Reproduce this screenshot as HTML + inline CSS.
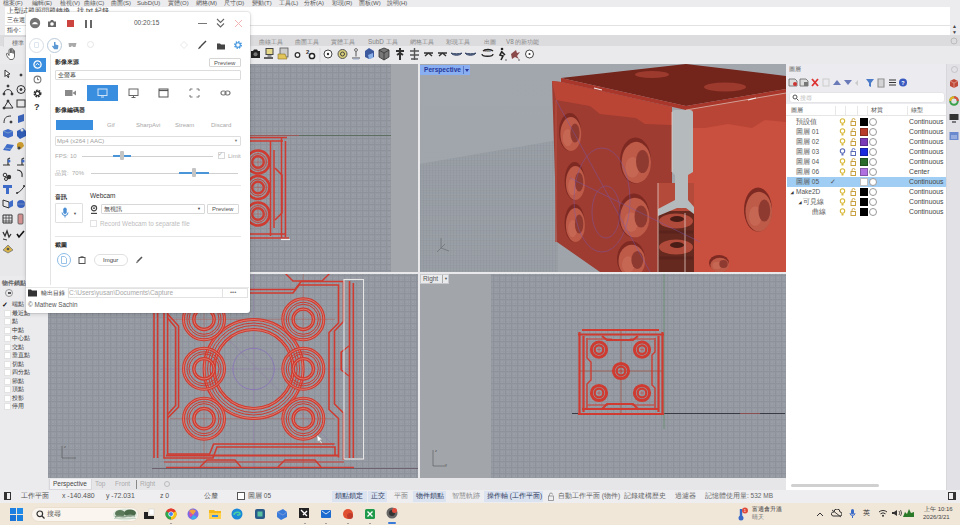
<!DOCTYPE html>
<html lang="zh-Hant"><head><meta charset="utf-8">
<style>
*{margin:0;padding:0;box-sizing:border-box}
html,body{width:960px;height:525px;overflow:hidden}
body{position:relative;font-family:"Liberation Sans",sans-serif;background:#ebebee;color:#333}
.a{position:absolute}
.t{position:absolute;white-space:nowrap;line-height:1}
.grid{background-color:#9a9ea7;background-image:linear-gradient(#8e929b 1px,transparent 1px),linear-gradient(90deg,#8e929b 1px,transparent 1px),linear-gradient(#959aa2 1px,transparent 1px),linear-gradient(90deg,#959aa2 1px,transparent 1px);background-size:6px 6px,6px 6px,3px 3px,3px 3px;background-position:2px 2px,2px 2px,0 0,0 0}
</style></head><body>
<div id="root" style="position:absolute;left:0;top:0;width:960px;height:525px;overflow:hidden">
<!-- menu bar -->
<div class="a" id="menu" style="left:0;top:0;width:960px;height:7px;background:#ececee;font-size:6px;color:#555">
<span class="t" style="left:3px;top:0">檔案(F)</span><span class="t" style="left:32px;top:0">編輯(E)</span><span class="t" style="left:60px;top:0">檢視(V)</span><span class="t" style="left:84px;top:0">曲線(C)</span><span class="t" style="left:111px;top:0">曲面(S)</span><span class="t" style="left:137px;top:0">SubD(U)</span><span class="t" style="left:168px;top:0">實體(O)</span><span class="t" style="left:196px;top:0">網格(M)</span><span class="t" style="left:224px;top:0">尺寸(D)</span><span class="t" style="left:252px;top:0">變動(T)</span><span class="t" style="left:279px;top:0">工具(L)</span><span class="t" style="left:304px;top:0">分析(A)</span><span class="t" style="left:332px;top:0">彩現(R)</span><span class="t" style="left:359px;top:0">面板(W)</span><span class="t" style="left:387px;top:0">說明(H)</span>
</div>
<!-- command area -->
<div class="a" style="left:5px;top:7px;width:945px;height:28px;background:#fff"></div>
<div class="a" style="left:5px;top:25px;width:945px;height:1px;background:#e2e2e4"></div>
<div class="a" style="left:950px;top:7px;width:10px;height:28px;background:#ececee"></div>
<div class="t" style="left:7px;top:7.5px;font-size:6.5px;color:#3a3a3a">上型試題照問題轉換... 找 txt 紀錄</div>
<div class="t" style="left:7px;top:17px;font-size:6.4px;color:#3a3a3a">三在選</div>
<div class="t" style="left:7px;top:26.5px;font-size:6.4px;color:#3a3a3a">指令:</div>
<div class="t" style="left:952px;top:24px;font-size:5px;color:#444">▲</div><div class="t" style="left:952px;top:30px;font-size:5px;color:#444">▼</div>
<!-- tab bar -->
<div class="a" style="left:0;top:35px;width:960px;height:12px;background:#dcdcdf"></div>
<!-- toolbar -->
<div class="a" style="left:0;top:46px;width:960px;height:18px;background:#eaeaed"></div>
<div id="tabs" style="position:absolute;left:0;top:0;font-size:6.3px;color:#858585">
<div class="a" style="left:3px;top:36px;width:24px;height:11px;background:#ebebee;border:1px solid #d8d8dc;border-bottom:none"></div><span class="t" style="left:12px;top:39.5px;color:#666">標準</span>
<span class="t" style="left:259px;top:39px">曲線工具</span><span class="t" style="left:295px;top:39px">曲面工具</span><span class="t" style="left:331px;top:39px">實體工具</span><span class="t" style="left:368px;top:39px">SubD 工具</span><span class="t" style="left:410px;top:39px">網格工具</span><span class="t" style="left:446px;top:39px">彩現工具</span><span class="t" style="left:484px;top:39px">出圖</span><span class="t" style="left:506px;top:39px">V8 的新功能</span>
</div>
<svg class="a" style="left:950px;top:37px" width="8" height="8" viewBox="0 0 8 8"><circle cx="4" cy="4" r="3" fill="none" stroke="#bbb" stroke-width="1"/></svg>
<svg class="a" style="left:0;top:46px" width="560" height="18" viewBox="0 0 560 18">
<!-- hand -->
<path d="M10 13.5c-2-1.5-3.5-3.5-3.5-5.5 0-1 1.2-1 1.7 0l.8 1.5V4c0-1 1.4-1 1.4 0V7V3c0-1 1.4-1 1.4 0V7V3.5c0-1 1.4-1 1.4 0v4V5c0-1 1.3-1 1.3 0V10c0 2-1 3.5-2.5 3.5z" fill="#fff" stroke="#666" stroke-width="1"/>
<!-- camera -->
<path d="M251 5h2l1-1.5h3l1 1.5h2v7h-9z" fill="#222"/><circle cx="255.5" cy="8.3" r="2" fill="#777"/>
<!-- computer -->
<rect x="266" y="2.5" width="7" height="6" fill="#e7d98a" stroke="#444" stroke-width="1"/><path d="M264 12h9" stroke="#333" stroke-width="1.5"/><rect x="267.5" y="9" width="4" height="2" fill="#999"/>
<!-- folder grid -->
<rect x="280" y="2" width="8" height="9" fill="#ccc" stroke="#555" stroke-width=".8"/><path d="M278 8h7l2 5h-9z" fill="#e2c55a" stroke="#8a7020" stroke-width=".6"/>
<!-- small circle -->
<circle cx="297.5" cy="9" r="2.3" fill="#fff" stroke="#333" stroke-width="1.3"/>
<!-- 2o -->
<text x="306" y="8" font-size="6" font-family="Liberation Sans" fill="#333" font-weight="bold">2</text><circle cx="312" cy="10" r="2.6" fill="#fff" stroke="#222" stroke-width="1.5"/>
<path d="M320 2v14" stroke="#d7d7da"/>
<circle cx="328" cy="8" r="4" fill="#fff" stroke="#444" stroke-width="1"/><circle cx="328" cy="8" r="1.2" fill="#333"/>
<circle cx="342.5" cy="8" r="4.5" fill="#d9cf7a" stroke="#555" stroke-width="1"/><circle cx="342.5" cy="8" r="2" fill="none" stroke="#444" stroke-width="1"/>
<circle cx="356" cy="4" r="1.4" fill="#fff" stroke="#444" stroke-width=".8"/><path d="M356 5.5v5M352 12h8" stroke="#555" stroke-width="1"/><path d="M353 13h6" stroke="#9ac" stroke-width="1"/>
<path d="M365 5l4-3 5 3v6l-5 2-4-2z" fill="#3e5a9e"/><path d="M368 9l5-2v5l-4 1z" fill="#8ab0e8"/>
<path d="M379 4l5-2 5 2v7l-5 3-5-3z" fill="#777" stroke="#333" stroke-width=".8"/><path d="M379 4l5 3 5-3M384 7v7" stroke="#333" stroke-width=".8" fill="none"/>
<path d="M396 5h8M400 2v12M397 9l3-2 3 2" stroke="#333" stroke-width="2" fill="none"/>
<path d="M410 5h9M410 9h9M411 13h7M414.5 2v12" stroke="#555" stroke-width="1.4" fill="none"/>
<path d="M424 7h9M425 10l3.5-3 3.5 3" stroke="#333" stroke-width="1.4" fill="none"/>
<path d="M438 7h9M439 10l3.5-3 3.5 3" stroke="#333" stroke-width="1.4" fill="none"/>
<path d="M451 7c2 3 9 3 11 0-2 1-9 1-11 0z" fill="#5a6a8a" stroke="#3a4a6a" stroke-width="1"/>
<path d="M465 7c2 3 9 3 11 0-2 1-9 1-11 0z" fill="#5a6a8a" stroke="#3a4a6a" stroke-width="1"/>
<path d="M482 8c0 3 11 3 11 0M483 5c2-2 8-2 10 0" stroke="#222" stroke-width="1.3" fill="none"/><text x="484" y="6" font-size="4" font-family="Liberation Sans" fill="#222">360</text>
<circle cx="502" cy="3" r="1.3" fill="#222"/><path d="M502 5l-2 4 3 1-2 4M502 6l3 3" stroke="#222" stroke-width="1.6" fill="none"/><circle cx="506" cy="14" r=".8" fill="#555"/>
<path d="M511 8l5-4 1 3 3-1-3 4 2 3-4-2-3 2z" fill="#8a4a4a"/><circle cx="519" cy="14" r=".8" fill="#555"/>
<circle cx="529.5" cy="8" r="4" fill="#fff" stroke="#444" stroke-width="1"/><circle cx="529.5" cy="8" r="1" fill="#333"/>
</svg>
<!-- left toolbar -->
<div class="a" style="left:0;top:64px;width:48px;height:212px;background:#e8e8eb"></div>
<svg class="a" style="left:0;top:64px" width="28" height="212" viewBox="0 0 28 212">
<g stroke="#333" stroke-width="1" fill="none">
<path d="M5 6l5 4-2.5.5L9 13 8 13.5 6.5 11 5 12.5z" fill="#fff"/>
<circle cx="21" cy="11" r="1" fill="#333"/>
<path d="M4 30c0-6 8-6 8 0" /><circle cx="4" cy="30" r="1" fill="#333"/><circle cx="12" cy="30" r="1" fill="#333"/><circle cx="8" cy="22" r="1" fill="#333"/>
<circle cx="21" cy="25.5" r="4"/><circle cx="21" cy="25.5" r="1" fill="#333"/>
<path d="M4 44l4-7 5 7z"/><circle cx="4" cy="44" r="1" fill="#333"/><circle cx="8" cy="37" r="1" fill="#333"/>
<rect x="17" y="36" width="8" height="7"/>
<path d="M4 59c0-5 2-7 7-7"/><circle cx="11" cy="58" r="1" fill="#333"/>
</g>
<path d="M18 52l6-2v7l-6 2z" fill="#3a63b8"/>
<path d="M3 67l5-2 5 2v5l-5 2-5-2z" fill="#3f6cc8"/><path d="M3 67l5 2 5-2" stroke="#9bc" fill="none" stroke-width=".6"/>
<path d="M17 67l6-3 3 3v5l-6 3-3-3z" fill="#2f5cb5"/><circle cx="22" cy="66" r="1.5" fill="#ddd"/>
<path d="M3 86l4-6 7 1-4 6z" fill="#3f6cc8"/><path d="M5 84l6 1" stroke="#bcd" stroke-width=".5"/>
<path d="M17 80c1-2 4-3 6-1l1 3-3 3-4-2z" fill="#c89a30"/><circle cx="19" cy="84" r="1.6" fill="#444"/>
<path d="M4 101h4v-6l2-1M3 101h7" stroke="#333" stroke-width="1.2" fill="none"/><circle cx="9" cy="97" r="1.5" fill="#3f6cc8"/>
<path d="M18 101h4v-6l2-1M17 101h7" stroke="#333" stroke-width="1.2" fill="none"/><circle cx="23" cy="97" r="1.5" fill="#3f6cc8"/>
<circle cx="5" cy="111" r="1.8" fill="none" stroke="#333"/><circle cx="9" cy="113" r="2.2" fill="#333"/><circle cx="6" cy="115" r="1.5" fill="none" stroke="#333"/>
<path d="M17 106c4 0 6 3 5 7" stroke="#333" stroke-width="1.2" fill="none"/>
<path d="M3 121h9v3H9v6H6v-6H3z" fill="#3f6cc8"/>
<path d="M17 129c4-1 5-5 8-7" stroke="#333" stroke-width="1" fill="none"/><circle cx="17" cy="129" r="1" fill="#333"/><circle cx="24" cy="122" r="1" fill="#333"/>
<path d="M3 136l6 2v6l-6-2z" fill="none" stroke="#333"/><path d="M9 138l4-2v6l-4 2z" fill="#3f6cc8"/>
<circle cx="21" cy="140" r="4" fill="#3a63c0"/><path d="M17 140h8" stroke="#9ab" stroke-width=".6"/>
<path d="M3 151h9v8H3z" fill="none" stroke="#333"/><path d="M3 154h9M3 157h9M6 151v8M9 151v8" stroke="#333" stroke-width=".7"/>
<rect x="18" y="150" width="5" height="10" rx="1" fill="#d29090" stroke="#555" stroke-width=".8"/>
<path d="M3 168l2 4 2-5 2 6 2-3" stroke="#333" stroke-width="1.3" fill="none"/><path d="M3 175l4 1" stroke="#333"/>
<path d="M17 170l2 3 5-6" stroke="#111" stroke-width="1.6" fill="none"/>
<path d="M3 186l5-5 5 5-5 3z" fill="#d8b54a" stroke="#777" stroke-width=".8"/><circle cx="8" cy="185" r="1.3" fill="#555"/>
</svg>
<!-- osnap panel -->
<div class="a" style="left:0;top:276px;width:48px;height:214px;background:#ebebee"></div>
<div class="t" style="left:2px;top:280px;font-size:6px;color:#666;font-weight:bold">物件鎖點</div>
<div class="a" style="left:5px;top:289px;width:8px;height:8px;border:1px solid #999;border-radius:50%"></div><div class="a" style="left:7.5px;top:292px;width:3px;height:2px;background:#555"></div>
<div class="t" style="left:2px;top:300.5px;font-size:7px;color:#111;font-weight:bold">✓</div>
<div class="t" style="left:12px;top:301.0px;font-size:6px;color:#333">端點</div>
<div class="a" style="left:4px;top:309.5px;width:7px;height:7px;background:#fff;border:1px solid #e2e2e2"></div>
<div class="t" style="left:12px;top:309.5px;font-size:6px;color:#333">最近點</div>
<div class="a" style="left:4px;top:318.0px;width:7px;height:7px;background:#fff;border:1px solid #e2e2e2"></div>
<div class="t" style="left:12px;top:318.0px;font-size:6px;color:#333">點</div>
<div class="a" style="left:4px;top:326.5px;width:7px;height:7px;background:#fff;border:1px solid #e2e2e2"></div>
<div class="t" style="left:12px;top:326.5px;font-size:6px;color:#333">中點</div>
<div class="a" style="left:4px;top:335.0px;width:7px;height:7px;background:#fff;border:1px solid #e2e2e2"></div>
<div class="t" style="left:12px;top:335.0px;font-size:6px;color:#333">中心點</div>
<div class="a" style="left:4px;top:343.5px;width:7px;height:7px;background:#fff;border:1px solid #e2e2e2"></div>
<div class="t" style="left:12px;top:343.5px;font-size:6px;color:#333">交點</div>
<div class="a" style="left:4px;top:352.0px;width:7px;height:7px;background:#fff;border:1px solid #e2e2e2"></div>
<div class="t" style="left:12px;top:352.0px;font-size:6px;color:#333">垂直點</div>
<div class="a" style="left:4px;top:360.5px;width:7px;height:7px;background:#fff;border:1px solid #e2e2e2"></div>
<div class="t" style="left:12px;top:360.5px;font-size:6px;color:#333">切點</div>
<div class="a" style="left:4px;top:369.0px;width:7px;height:7px;background:#fff;border:1px solid #e2e2e2"></div>
<div class="t" style="left:12px;top:369.0px;font-size:6px;color:#333">四分點</div>
<div class="a" style="left:4px;top:377.5px;width:7px;height:7px;background:#fff;border:1px solid #e2e2e2"></div>
<div class="t" style="left:12px;top:377.5px;font-size:6px;color:#333">節點</div>
<div class="a" style="left:4px;top:386.0px;width:7px;height:7px;background:#fff;border:1px solid #e2e2e2"></div>
<div class="t" style="left:12px;top:386.0px;font-size:6px;color:#333">頂點</div>
<div class="a" style="left:4px;top:394.5px;width:7px;height:7px;background:#fff;border:1px solid #e2e2e2"></div>
<div class="t" style="left:12px;top:394.5px;font-size:6px;color:#333">投影</div>
<div class="a" style="left:4px;top:403.0px;width:7px;height:7px;background:#fff;border:1px solid #e2e2e2"></div>
<div class="t" style="left:12px;top:403.0px;font-size:6px;color:#333">停用</div>

<!-- viewports -->
<div class="a grid" id="vpTop" style="left:48px;top:64px;width:343px;height:208px;overflow:hidden"><svg width="343" height="208" viewBox="48 64 343 208" style="position:absolute;left:0;top:0"><path d="M249 135.5h50" stroke="#9a5a58" stroke-width="1.2"/><path d="M299 135.5h92" stroke="#5e6e60" stroke-width="1.2"/><circle cx="258" cy="162" r="11.5" fill="none" stroke="#cf3b30" stroke-width="2.6"/><circle cx="258" cy="162" r="8.4" fill="none" stroke="#cf3b30" stroke-width=".9"/><circle cx="258" cy="162" r="5.8" fill="none" stroke="#cf3b30" stroke-width="2.4"/><path d="M248 162h20M258 152v20" stroke="#b05a50" stroke-width=".5"/><circle cx="258" cy="187.5" r="11.5" fill="none" stroke="#cf3b30" stroke-width="2.6"/><circle cx="258" cy="187.5" r="8.4" fill="none" stroke="#cf3b30" stroke-width=".9"/><circle cx="258" cy="187.5" r="5.8" fill="none" stroke="#cf3b30" stroke-width="2.4"/><path d="M248 187.5h20M258 177.5v20" stroke="#b05a50" stroke-width=".5"/><circle cx="258" cy="214" r="11.5" fill="none" stroke="#cf3b30" stroke-width="2.6"/><circle cx="258" cy="214" r="8.4" fill="none" stroke="#cf3b30" stroke-width=".9"/><circle cx="258" cy="214" r="5.8" fill="none" stroke="#cf3b30" stroke-width="2.4"/><path d="M248 214h20M258 204v20" stroke="#b05a50" stroke-width=".5"/><g fill="none" stroke="#cf3b30" stroke-width="1.5">
<path d="M249 137.5h38M249 141h34M249 234h36M249 238h40"/>
<path d="M281.5 137v101M285.5 141v96"/>
<path d="M270.5 141v95M274 150v78"/>
<path d="M275 168l7 7v38l-7 7"/>
</g>
<path d="M281 239.5h9" stroke="#eee" stroke-width="1.2"/></svg></div>
<div class="a" style="left:391px;top:64px;width:27px;height:208px;background:#a4a8ad"></div>
<div class="a" id="vpPersp" style="left:419px;top:64px;width:367px;height:208px;overflow:hidden"><svg width="367" height="208" viewBox="419 64 367 208" style="position:absolute;left:0;top:0">
<defs><linearGradient id="pbg" x1="0" y1="0" x2="0" y2="1"><stop offset="0" stop-color="#a2a7ae"/><stop offset="1" stop-color="#9fa4ab"/></linearGradient>
<pattern id="fgrid" width="3" height="2.5" patternUnits="userSpaceOnUse"><rect width="3" height="2.5" fill="#9aa0a7"/><path d="M0 .5h3M.5 0v2.5" stroke="#90959c" stroke-width=".5"/></pattern></defs>
<rect x="419" y="64" width="367" height="208" fill="url(#pbg)"/>
<path d="M419 164 558 140V272H419z" fill="url(#fgrid)"/>
<g stroke="#6a6e74" stroke-width=".7" fill="none"><path d="M441 238v10l-4 4M441 248l8 3M441 248l4-4"/></g>
<!-- right face -->
<path d="M686 108 786 90V272H686z" fill="#c94f3e"/>
<path d="M686 110 786 92V122L765 120 752 128 728 124 705 128 693 128z" fill="#b94536"/>
<!-- left face -->
<path d="M552 81 561 82 672 107V183H658V272H600L557 242z" fill="#9e3c32"/>
<path d="M552 81 561 82 672 107 672 125 645 124 636 118 600 114 590 106 556 100z" fill="#bb4535"/>
<path d="M556 100v142" stroke="#b04a3e" stroke-width="1.5"/>
<!-- slot -->
<path d="M658 183h36v30h-36z" fill="#b44a3a"/>
<path d="M658 211h36v61h-36z" fill="#66291f"/>
<ellipse cx="676" cy="221" rx="17" ry="7.5" fill="#b04a3a"/><ellipse cx="677" cy="219" rx="7" ry="3" fill="#4a1c16"/>
<ellipse cx="676" cy="247" rx="17" ry="7.5" fill="#b04a3a"/><ellipse cx="677" cy="245" rx="7" ry="3" fill="#4a1c16"/>
<path d="M659 232h34M659 258h34" stroke="#5a241c" stroke-width="3"/>
<path d="M672 113Q672 110 675 110H690Q693 110 693 113V172L688 175V200L694 207V214L686 208H677L658 216V209L675 200V175L672 172Z" fill="#b5babd"/>
<path d="M658 183v89M685 213v59M672 112v60" stroke="#e8d4cc" stroke-width=".9" opacity=".85"/>
<!-- lid -->
<path d="M561 78 686 64 786 76V89L686 106z" fill="#73241b"/>
<path d="M561 78 686 106 786 89V93L686 110 561 82z" fill="#a8362a"/><path d="M686 110 786 93" stroke="#e0c8c0" stroke-width=".7"/>
<ellipse cx="652" cy="74.5" rx="17" ry="3.5" fill="#9c3a2e"/>
<ellipse cx="725" cy="87" rx="21" ry="4.5" fill="#9c3a2e"/>
<path d="M594 88l8 2M748 100l8-2" stroke="#efe6e4" stroke-width="1.2"/>
<ellipse cx="570" cy="132" rx="11" ry="19" fill="#7e2a22"/><ellipse cx="570.8" cy="134" rx="10.4" ry="17.1" fill="#bd5a48"/><ellipse cx="567.8" cy="137.7" rx="5.0" ry="8.6" fill="#c86a58" opacity=".8"/><ellipse cx="575.0" cy="133" rx="4.6" ry="9.5" fill="#8f3a30"/><ellipse cx="574.6" cy="181" rx="10" ry="19" fill="#7e2a22"/><ellipse cx="575.4" cy="183" rx="9.5" ry="17.1" fill="#bd5a48"/><ellipse cx="572.6" cy="186.7" rx="4.5" ry="8.6" fill="#c86a58" opacity=".8"/><ellipse cx="579.1" cy="182" rx="4.2" ry="9.5" fill="#8f3a30"/><ellipse cx="574.6" cy="223" rx="10" ry="19" fill="#7e2a22"/><ellipse cx="575.4" cy="225" rx="9.5" ry="17.1" fill="#bd5a48"/><ellipse cx="572.6" cy="228.7" rx="4.5" ry="8.6" fill="#c86a58" opacity=".8"/><ellipse cx="579.1" cy="224" rx="4.2" ry="9.5" fill="#8f3a30"/><ellipse cx="635.5" cy="160.5" rx="15.5" ry="23" fill="#7e2a22"/><ellipse cx="636.3" cy="162.5" rx="14.7" ry="20.7" fill="#bd5a48"/><ellipse cx="632.4" cy="167.4" rx="7.0" ry="10.3" fill="#c86a58" opacity=".8"/><ellipse cx="642.5" cy="161.5" rx="6.5" ry="11.5" fill="#8f3a30"/><ellipse cx="634" cy="215.6" rx="15.5" ry="22" fill="#7e2a22"/><ellipse cx="634.8" cy="217.6" rx="14.7" ry="19.8" fill="#bd5a48"/><ellipse cx="630.9" cy="222.2" rx="7.0" ry="9.9" fill="#c86a58" opacity=".8"/><ellipse cx="641.0" cy="216.6" rx="6.5" ry="11.0" fill="#8f3a30"/><ellipse cx="631" cy="259" rx="14" ry="18" fill="#7e2a22"/><ellipse cx="631.8" cy="261" rx="13.3" ry="16.2" fill="#bd5a48"/><ellipse cx="628.2" cy="264.4" rx="6.3" ry="8.1" fill="#c86a58" opacity=".8"/><ellipse cx="637.3" cy="260" rx="5.9" ry="9.0" fill="#8f3a30"/><ellipse cx="758" cy="209.6" rx="14" ry="22" fill="#7e2a22"/><ellipse cx="758.8" cy="211.6" rx="13.3" ry="19.8" fill="#bd5a48"/><ellipse cx="755.2" cy="216.2" rx="6.3" ry="9.9" fill="#c86a58" opacity=".8"/><ellipse cx="764.3" cy="210.6" rx="5.9" ry="11.0" fill="#8f3a30"/><ellipse cx="719" cy="263" rx="10" ry="8" fill="#7e2a22"/><ellipse cx="719.8" cy="265" rx="9.5" ry="7.2" fill="#bd5a48"/><ellipse cx="717.0" cy="265.4" rx="4.5" ry="3.6" fill="#c86a58" opacity=".8"/><ellipse cx="723.5" cy="264" rx="4.2" ry="4.0" fill="#8f3a30"/><g fill="none" stroke="#7a5ab8" stroke-width=".7" opacity=".6">
<ellipse cx="602" cy="200" rx="28" ry="52"/><ellipse cx="606" cy="212" rx="14" ry="26"/>
<path d="M556 100 650 272M570 178 700 242"/></g>
</svg>
<div class="a" style="left:1px;top:1px;width:50px;height:10px;background:#8aaff0"></div><div class="t" style="left:5px;top:2.5px;font-size:6.6px;font-weight:bold;color:#26399a">Perspective</div><div class="a" style="left:44px;top:2px;width:1px;height:8px;background:#5a7ac8"></div><svg class="a" style="left:46px;top:5px" width="4" height="3" viewBox="0 0 4 3"><path d="M0 0h4L2 3z" fill="#26399a"/></svg></div>
<div class="a grid" id="vpFront" style="left:48px;top:273px;width:370px;height:205px;overflow:hidden"><svg width="370" height="205" viewBox="48 273 370 205" style="position:absolute;left:0;top:0"><g stroke="#b0584e" stroke-width=".6" fill="none" opacity=".75"><path d="M170 319.3h165M170 418.7h165M204 273v195M303.3 273v195"/></g><g stroke="#8c6ab0" stroke-width=".6" fill="none" opacity=".55"><path d="M160 369h190M253.6 273v195"/><path d="M212 323 335 447"/></g><circle cx="253.6" cy="369" r="49.5" fill="none" stroke="#cf3b30" stroke-width="3"/><circle cx="253.6" cy="369" r="49.5" fill="none" stroke="#de8a7e" stroke-width=".8"/><circle cx="253.6" cy="369" r="46" fill="none" stroke="#cf3b30" stroke-width="1"/><circle cx="253.6" cy="369" r="43.5" fill="none" stroke="#cf3b30" stroke-width="1"/><circle cx="253.6" cy="369" r="39.5" fill="none" stroke="#cf3b30" stroke-width="3.2"/><circle cx="253.6" cy="369" r="39.5" fill="none" stroke="#de8a7e" stroke-width=".8"/><circle cx="253.6" cy="369" r="20.7" fill="none" stroke="#8466c0" stroke-width=".8" opacity=".8"/><circle cx="204" cy="319.3" r="20.5" fill="none" stroke="#cf3b30" stroke-width="3"/><circle cx="204" cy="319.3" r="20.5" fill="none" stroke="#de8a7e" stroke-width=".8"/><circle cx="204" cy="319.3" r="17" fill="none" stroke="#cf3b30" stroke-width="1"/><circle cx="204" cy="319.3" r="15" fill="none" stroke="#cf3b30" stroke-width="1"/><circle cx="204" cy="319.3" r="10.2" fill="none" stroke="#cf3b30" stroke-width="3.4"/><circle cx="204" cy="319.3" r="10.2" fill="none" stroke="#de8a7e" stroke-width=".8"/><circle cx="204" cy="368.8" r="20.5" fill="none" stroke="#cf3b30" stroke-width="3"/><circle cx="204" cy="368.8" r="20.5" fill="none" stroke="#de8a7e" stroke-width=".8"/><circle cx="204" cy="368.8" r="17" fill="none" stroke="#cf3b30" stroke-width="1"/><circle cx="204" cy="368.8" r="15" fill="none" stroke="#cf3b30" stroke-width="1"/><circle cx="204" cy="368.8" r="10.2" fill="none" stroke="#cf3b30" stroke-width="3.4"/><circle cx="204" cy="368.8" r="10.2" fill="none" stroke="#de8a7e" stroke-width=".8"/><circle cx="204" cy="418.7" r="20.5" fill="none" stroke="#cf3b30" stroke-width="3"/><circle cx="204" cy="418.7" r="20.5" fill="none" stroke="#de8a7e" stroke-width=".8"/><circle cx="204" cy="418.7" r="17" fill="none" stroke="#cf3b30" stroke-width="1"/><circle cx="204" cy="418.7" r="15" fill="none" stroke="#cf3b30" stroke-width="1"/><circle cx="204" cy="418.7" r="10.2" fill="none" stroke="#cf3b30" stroke-width="3.4"/><circle cx="204" cy="418.7" r="10.2" fill="none" stroke="#de8a7e" stroke-width=".8"/><circle cx="303.3" cy="319.3" r="20.5" fill="none" stroke="#cf3b30" stroke-width="3"/><circle cx="303.3" cy="319.3" r="20.5" fill="none" stroke="#de8a7e" stroke-width=".8"/><circle cx="303.3" cy="319.3" r="17" fill="none" stroke="#cf3b30" stroke-width="1"/><circle cx="303.3" cy="319.3" r="15" fill="none" stroke="#cf3b30" stroke-width="1"/><circle cx="303.3" cy="319.3" r="10.2" fill="none" stroke="#cf3b30" stroke-width="3.4"/><circle cx="303.3" cy="319.3" r="10.2" fill="none" stroke="#de8a7e" stroke-width=".8"/><circle cx="303.3" cy="368.8" r="20.5" fill="none" stroke="#cf3b30" stroke-width="3"/><circle cx="303.3" cy="368.8" r="20.5" fill="none" stroke="#de8a7e" stroke-width=".8"/><circle cx="303.3" cy="368.8" r="17" fill="none" stroke="#cf3b30" stroke-width="1"/><circle cx="303.3" cy="368.8" r="15" fill="none" stroke="#cf3b30" stroke-width="1"/><circle cx="303.3" cy="368.8" r="10.2" fill="none" stroke="#cf3b30" stroke-width="3.4"/><circle cx="303.3" cy="368.8" r="10.2" fill="none" stroke="#de8a7e" stroke-width=".8"/><circle cx="303.3" cy="418.7" r="20.5" fill="none" stroke="#cf3b30" stroke-width="3"/><circle cx="303.3" cy="418.7" r="20.5" fill="none" stroke="#de8a7e" stroke-width=".8"/><circle cx="303.3" cy="418.7" r="17" fill="none" stroke="#cf3b30" stroke-width="1"/><circle cx="303.3" cy="418.7" r="15" fill="none" stroke="#cf3b30" stroke-width="1"/><circle cx="303.3" cy="418.7" r="10.2" fill="none" stroke="#cf3b30" stroke-width="3.4"/><circle cx="303.3" cy="418.7" r="10.2" fill="none" stroke="#de8a7e" stroke-width=".8"/><g fill="none" stroke="#cf3b30" stroke-width="1.6">
<path d="M154 273v185M157.6 273v185"/>
<path d="M164 273v185h49l4-11h118v9"/>
<path d="M167.6 273v181h42l4-10h121"/>
<path d="M167.6 318l8 9.5v78l-8 9M167.6 314l11 12v81l-11 11"/>
<path d="M249 289.5h46l6-8h42.5v40l-9 9.5v73l9 9v47"/>
<path d="M249 293h44l6-8h39.5v38l-9.5 9.5v77l9.5 9v39"/>
<path d="M349 346l-8 6v18l8 6M345.5 349l-4 3v18l4 3" stroke-width="1.2"/>
<path d="M349.5 281v177M353.3 283v175"/>
<path d="M166 455.5h172M166 467.6h188" stroke-width="1.8"/>
<path d="M200 467l7-7h28l6 7M278 467l7-7h30l6 7" stroke-width="1.4"/>
<path d="M164 462h180" stroke-width="1"/>
<path d="M285 273l8 8h29l8-8" stroke-width="1.4"/>
</g>
<path d="M152 468.5h266" stroke="#6a5a6a" stroke-width=".9"/>
<rect x="344" y="279.5" width="19.5" height="179.5" fill="none" stroke="#e6e6e6" stroke-width="1.1"/>
<g stroke="#555" stroke-width=".6" fill="none"><path d="M62 446v12h12"/></g>
<text x="64" y="448" font-size="4" fill="#555" font-family="Liberation Sans">z</text><text x="74" y="459" font-size="4" fill="#555" font-family="Liberation Sans">x</text>
<path d="M317 435l.5 7 1.6-1.6 2 3 1-.6-2-3h2.4z" fill="#fff" stroke="#777" stroke-width=".4"/>
</svg></div>
<div class="a" id="vpRight" style="left:419px;top:273px;width:367px;height:205px;background:#a2a6ab;overflow:hidden"><div class="a grid" style="left:72px;top:0;width:295px;height:205px"></div><svg width="367" height="205" viewBox="419 273 367 205" style="position:absolute;left:0;top:0">
<path d="M572 413.5h6M664 413.5h121" stroke="#3a3a44" stroke-width="1"/><path d="M740 413.5h20" stroke="#8a5050" stroke-width="1"/>
<path d="M664 273v156" stroke="#5f8a6a" stroke-width=".8"/>
<path d="M580 371h82M621 330v84" stroke="#a04a3a" stroke-width=".7"/>
<g fill="none" stroke="#cf3b30">
<path d="M582 330h77M578 334.5h86" stroke-width="2"/>
<path d="M579.5 332v82M583.5 336v76" stroke-width="2.2"/>
<path d="M587 338v20l4 4v18l-4 4v24" stroke-width="1.4"/>
<path d="M662.5 332v82M658.5 336v76" stroke-width="2.2"/>
<path d="M655 338v14l-3 3v30l3 3v22" stroke-width="1.4"/>
<path d="M582 409h77M578 414h86" stroke-width="2.2"/>
<path d="M602 336l5 4h26l5-4M602 409l5-5h26l5 5" stroke-width="2"/>
<path d="M588 339h24M630 339h24M588 405h20M632 405h22" stroke-width="1"/>
</g>
<circle cx="599" cy="349.6" r="7.6" fill="none" stroke="#cf3b30" stroke-width="3"/><circle cx="599" cy="349.6" r="4.3" fill="none" stroke="#cf3b30" stroke-width="2.2"/><path d="M597 349.6h4M599 347.6v4" stroke="#cf3b30" stroke-width=".5"/><circle cx="642" cy="349.6" r="7.6" fill="none" stroke="#cf3b30" stroke-width="3"/><circle cx="642" cy="349.6" r="4.3" fill="none" stroke="#cf3b30" stroke-width="2.2"/><path d="M640 349.6h4M642 347.6v4" stroke="#cf3b30" stroke-width=".5"/><circle cx="621" cy="371" r="7.6" fill="none" stroke="#cf3b30" stroke-width="3"/><circle cx="621" cy="371" r="4.3" fill="none" stroke="#cf3b30" stroke-width="2.2"/><path d="M619 371h4M621 369v4" stroke="#cf3b30" stroke-width=".5"/><circle cx="599" cy="393" r="7.6" fill="none" stroke="#cf3b30" stroke-width="3"/><circle cx="599" cy="393" r="4.3" fill="none" stroke="#cf3b30" stroke-width="2.2"/><path d="M597 393h4M599 391v4" stroke="#cf3b30" stroke-width=".5"/><circle cx="642" cy="393" r="7.6" fill="none" stroke="#cf3b30" stroke-width="3"/><circle cx="642" cy="393" r="4.3" fill="none" stroke="#cf3b30" stroke-width="2.2"/><path d="M640 393h4M642 391v4" stroke="#cf3b30" stroke-width=".5"/><g stroke="#555" stroke-width=".6" fill="none"><path d="M433 450v16h12"/></g><text x="435" y="452" font-size="4" fill="#555" font-family="Liberation Sans">z</text><text x="445" y="466" font-size="4" fill="#555" font-family="Liberation Sans">y</text></svg>
<div class="a" style="left:1px;top:1px;width:29px;height:10px;background:#e9eaec;border:1px solid #c8c8cc"></div><div class="t" style="left:4px;top:3px;font-size:6.5px;color:#555">Right</div><div class="a" style="left:23px;top:2px;width:1px;height:8px;background:#aaa"></div><div class="t" style="left:25px;top:4px;font-size:4px;color:#555">▼</div></div>
<div class="a" style="left:418px;top:64px;width:2px;height:414px;background:#e9e9ec"></div>
<div class="a" style="left:48px;top:271.5px;width:738px;height:2px;background:#e9e9ec"></div>
<!-- viewport tabs -->
<div class="a" style="left:48px;top:478px;width:738px;height:12px;background:#e6e6e9"></div>
<div class="a" style="left:49px;top:479px;width:43px;height:11px;background:#f4f4f6;border:1px solid #d8d8dc;border-top:none"></div>
<div class="t" style="left:53px;top:481px;font-size:6.5px;color:#444">Perspective</div>
<div class="t" style="left:95px;top:481px;font-size:6.5px;color:#aaa">Top</div>
<div class="t" style="left:115px;top:481px;font-size:6.5px;color:#aaa">Front</div>
<div class="a" style="left:136px;top:480px;width:1px;height:9px;background:#888"></div>
<div class="t" style="left:140px;top:481px;font-size:6.5px;color:#aaa">Right</div>
<div class="a" style="left:164px;top:481px;width:6px;height:6px;border:1px solid #bbb;border-radius:50%"></div>

<!-- layers panel -->
<div class="a" style="left:786px;top:64px;width:162px;height:426px;background:#fff"></div>
<div class="a" style="left:947px;top:64px;width:13px;height:426px;background:#e2e2e6"></div>

<div class="a" style="left:786px;top:64px;width:161px;height:40px;background:#ececf0"></div>
<div class="t" style="left:789px;top:66px;font-size:6px;color:#666">圖層</div>
<svg class="a" style="left:786px;top:76px" width="125" height="13" viewBox="0 0 125 13">
<path d="M3 3h6l2 2v5H3z" fill="#ddd" stroke="#666" stroke-width=".8"/><circle cx="9" cy="8" r="2" fill="#c33"/>
<path d="M14 3h6l2 2v5h-8z" fill="#ddd" stroke="#666" stroke-width=".8"/><rect x="18" y="6" width="4" height="4" fill="#777"/>
<path d="M26 3l6 7M32 3l-6 7" stroke="#d33" stroke-width="1.8"/>
<rect x="37" y="3" width="6" height="7" fill="none" stroke="#ccc"/>
<path d="M47 9l4-5 4 5z" fill="#6a7ab8"/><path d="M58 4h8l-4 5z" fill="#6a7ab8"/>
<path d="M72 4l-3 3 3 3z" fill="#ccc"/>
<path d="M80 3h8l-3 4v4l-2-1V7z" fill="#4a7ac8"/>
<rect x="92" y="3" width="6" height="8" fill="none" stroke="#888"/><path d="M92 5h6M92 7h6M92 9h6" stroke="#888" stroke-width=".5"/>
<path d="M103 4h7M103 6.5h7M103 9h7" stroke="#333" stroke-width="1.2"/>
<circle cx="117" cy="6.5" r="4" fill="#3a5ac0"/><text x="115.3" y="9" font-size="5.5" fill="#fff" font-family="Liberation Sans" font-weight="bold">?</text>
</svg>
<div class="a" style="left:789px;top:91.5px;width:156px;height:11px;border:1px solid #e4e4e6;border-radius:3px;background:#fff"></div>
<svg class="a" style="left:792px;top:94px" width="7" height="7" viewBox="0 0 7 7"><circle cx="3" cy="3" r="2" fill="none" stroke="#555" stroke-width="1"/><path d="M4.5 4.5l2 2" stroke="#555"/></svg>
<div class="t" style="left:800px;top:95px;font-size:6px;color:#bbb">搜尋</div>
<div class="a" style="left:786px;top:105px;width:160px;height:11px;border-bottom:1px solid #e6e6e6"></div>
<div class="t" style="left:791px;top:107px;font-size:6px;color:#555">圖層</div>
<div class="t" style="left:871px;top:107px;font-size:6px;color:#555">材質</div>
<div class="t" style="left:911px;top:107px;font-size:6px;color:#555">線型</div>
<div class="a" style="left:835px;top:106px;width:1px;height:9px;background:#e8e8e8"></div><div class="a" style="left:845px;top:106px;width:1px;height:9px;background:#e8e8e8"></div><div class="a" style="left:857px;top:106px;width:1px;height:9px;background:#e8e8e8"></div><div class="a" style="left:867px;top:106px;width:1px;height:9px;background:#e8e8e8"></div><div class="a" style="left:907px;top:106px;width:1px;height:9px;background:#e8e8e8"></div>
<div class="t" style="left:796px;top:119px;font-size:6.5px;color:#555">預設值</div>
<svg class="a" style="left:839px;top:118px" width="20" height="8" viewBox="0 0 20 8"><circle cx="3.5" cy="3" r="2.2" fill="none" stroke="#d8b83a" stroke-width="1.1"/><path d="M2.5 5.5h2v2h-2z" fill="#d8b83a"/><rect x="12" y="3.5" width="4.5" height="4" fill="none" stroke="#c8a040" stroke-width="1"/><path d="M13 3.5V2a1.5 1.5 0 0 1 3 0" stroke="#c8a040" fill="none" stroke-width=".9"/></svg>
<div class="a" style="left:860px;top:118px;width:8px;height:8px;background:#000;border:1px solid rgba(0,0,0,.25)"></div>
<div class="a" style="left:869px;top:118px;width:8px;height:8px;border:1px solid #9a9a9a;border-radius:50%;background:#fff"></div>
<div class="t" style="left:909px;top:119px;font-size:6.8px;color:#444">Continuous</div>
<div class="t" style="left:796px;top:129px;font-size:6.5px;color:#555">圖層 01</div>
<svg class="a" style="left:839px;top:128px" width="20" height="8" viewBox="0 0 20 8"><circle cx="3.5" cy="3" r="2.2" fill="none" stroke="#d8b83a" stroke-width="1.1"/><path d="M2.5 5.5h2v2h-2z" fill="#d8b83a"/><rect x="12" y="3.5" width="4.5" height="4" fill="none" stroke="#c8a040" stroke-width="1"/><path d="M13 3.5V2a1.5 1.5 0 0 1 3 0" stroke="#c8a040" fill="none" stroke-width=".9"/></svg>
<div class="a" style="left:860px;top:128px;width:8px;height:8px;background:#b83a2a;border:1px solid rgba(0,0,0,.25)"></div>
<div class="a" style="left:869px;top:128px;width:8px;height:8px;border:1px solid #9a9a9a;border-radius:50%;background:#fff"></div>
<div class="t" style="left:909px;top:129px;font-size:6.8px;color:#444">Continuous</div>
<div class="t" style="left:796px;top:139px;font-size:6.5px;color:#555">圖層 02</div>
<svg class="a" style="left:839px;top:138px" width="20" height="8" viewBox="0 0 20 8"><circle cx="3.5" cy="3" r="2.2" fill="none" stroke="#d8b83a" stroke-width="1.1"/><path d="M2.5 5.5h2v2h-2z" fill="#d8b83a"/><rect x="12" y="3.5" width="4.5" height="4" fill="none" stroke="#c8a040" stroke-width="1"/><path d="M13 3.5V2a1.5 1.5 0 0 1 3 0" stroke="#c8a040" fill="none" stroke-width=".9"/></svg>
<div class="a" style="left:860px;top:138px;width:8px;height:8px;background:#7a3ab8;border:1px solid rgba(0,0,0,.25)"></div>
<div class="a" style="left:869px;top:138px;width:8px;height:8px;border:1px solid #9a9a9a;border-radius:50%;background:#fff"></div>
<div class="t" style="left:909px;top:139px;font-size:6.8px;color:#444">Continuous</div>
<div class="t" style="left:796px;top:149px;font-size:6.5px;color:#555">圖層 03</div>
<svg class="a" style="left:839px;top:148px" width="20" height="8" viewBox="0 0 20 8"><circle cx="3.5" cy="3" r="2.2" fill="none" stroke="#5a6ab8" stroke-width="1.1"/><path d="M2.5 5.5h2v2h-2z" fill="#5a6ab8"/><rect x="12" y="3.5" width="4.5" height="4" fill="none" stroke="#5a6ab8" stroke-width="1"/><path d="M13 3.5V2a1.5 1.5 0 0 1 3 0" stroke="#5a6ab8" fill="none" stroke-width=".9"/></svg>
<div class="a" style="left:860px;top:148px;width:8px;height:8px;background:#1a2adc;border:1px solid rgba(0,0,0,.25)"></div>
<div class="a" style="left:869px;top:148px;width:8px;height:8px;border:1px solid #9a9a9a;border-radius:50%;background:#fff"></div>
<div class="t" style="left:909px;top:149px;font-size:6.8px;color:#444">Continuous</div>
<div class="t" style="left:796px;top:159px;font-size:6.5px;color:#555">圖層 04</div>
<svg class="a" style="left:839px;top:158px" width="20" height="8" viewBox="0 0 20 8"><circle cx="3.5" cy="3" r="2.2" fill="none" stroke="#d8b83a" stroke-width="1.1"/><path d="M2.5 5.5h2v2h-2z" fill="#d8b83a"/><rect x="12" y="3.5" width="4.5" height="4" fill="none" stroke="#c8a040" stroke-width="1"/><path d="M13 3.5V2a1.5 1.5 0 0 1 3 0" stroke="#c8a040" fill="none" stroke-width=".9"/></svg>
<div class="a" style="left:860px;top:158px;width:8px;height:8px;background:#2a6a2a;border:1px solid rgba(0,0,0,.25)"></div>
<div class="a" style="left:869px;top:158px;width:8px;height:8px;border:1px solid #9a9a9a;border-radius:50%;background:#fff"></div>
<div class="t" style="left:909px;top:159px;font-size:6.8px;color:#444">Continuous</div>
<div class="t" style="left:796px;top:169px;font-size:6.5px;color:#555">圖層 06</div>
<svg class="a" style="left:839px;top:168px" width="20" height="8" viewBox="0 0 20 8"><circle cx="3.5" cy="3" r="2.2" fill="none" stroke="#d8b83a" stroke-width="1.1"/><path d="M2.5 5.5h2v2h-2z" fill="#d8b83a"/><rect x="12" y="3.5" width="4.5" height="4" fill="none" stroke="#c8a040" stroke-width="1"/><path d="M13 3.5V2a1.5 1.5 0 0 1 3 0" stroke="#c8a040" fill="none" stroke-width=".9"/></svg>
<div class="a" style="left:860px;top:168px;width:8px;height:8px;background:#b070e0;border:1px solid rgba(0,0,0,.25)"></div>
<div class="a" style="left:869px;top:168px;width:8px;height:8px;border:1px solid #9a9a9a;border-radius:50%;background:#fff"></div>
<div class="t" style="left:909px;top:169px;font-size:6.8px;color:#444">Center</div>
<div class="a" style="left:787px;top:177px;width:159px;height:10px;background:#9fcdf3"></div>
<div class="t" style="left:830px;top:178px;font-size:7px;color:#555">✓</div>
<div class="t" style="left:796px;top:179px;font-size:6.5px;color:#555">圖層 05</div>
<div class="a" style="left:860px;top:178px;width:8px;height:8px;background:#fff;border:1px solid rgba(0,0,0,.25)"></div>
<div class="a" style="left:869px;top:178px;width:8px;height:8px;border:1px solid #9a9a9a;border-radius:50%;background:#fff"></div>
<div class="t" style="left:909px;top:179px;font-size:6.8px;color:#444">Continuous</div>
<div class="t" style="left:790px;top:191px;font-size:4px;color:#333">◢</div>
<div class="t" style="left:796px;top:189px;font-size:6.5px;color:#555">Make2D</div>
<svg class="a" style="left:839px;top:188px" width="20" height="8" viewBox="0 0 20 8"><circle cx="3.5" cy="3" r="2.2" fill="none" stroke="#d8b83a" stroke-width="1.1"/><path d="M2.5 5.5h2v2h-2z" fill="#d8b83a"/><rect x="12" y="3.5" width="4.5" height="4" fill="none" stroke="#c8a040" stroke-width="1"/><path d="M13 3.5V2a1.5 1.5 0 0 1 3 0" stroke="#c8a040" fill="none" stroke-width=".9"/></svg>
<div class="a" style="left:860px;top:188px;width:8px;height:8px;background:#000;border:1px solid rgba(0,0,0,.25)"></div>
<div class="a" style="left:869px;top:188px;width:8px;height:8px;border:1px solid #9a9a9a;border-radius:50%;background:#fff"></div>
<div class="t" style="left:909px;top:189px;font-size:6.8px;color:#444">Continuous</div>
<div class="t" style="left:798px;top:201px;font-size:4px;color:#333">◢</div>
<div class="t" style="left:803px;top:199px;font-size:6.5px;color:#555">可見線</div>
<svg class="a" style="left:839px;top:198px" width="20" height="8" viewBox="0 0 20 8"><circle cx="3.5" cy="3" r="2.2" fill="none" stroke="#d8b83a" stroke-width="1.1"/><path d="M2.5 5.5h2v2h-2z" fill="#d8b83a"/><rect x="12" y="3.5" width="4.5" height="4" fill="none" stroke="#c8a040" stroke-width="1"/><path d="M13 3.5V2a1.5 1.5 0 0 1 3 0" stroke="#c8a040" fill="none" stroke-width=".9"/></svg>
<div class="a" style="left:860px;top:198px;width:8px;height:8px;background:#000;border:1px solid rgba(0,0,0,.25)"></div>
<div class="a" style="left:869px;top:198px;width:8px;height:8px;border:1px solid #9a9a9a;border-radius:50%;background:#fff"></div>
<div class="t" style="left:909px;top:199px;font-size:6.8px;color:#444">Continuous</div>
<div class="t" style="left:812px;top:209px;font-size:6.5px;color:#555">曲線</div>
<svg class="a" style="left:839px;top:208px" width="20" height="8" viewBox="0 0 20 8"><circle cx="3.5" cy="3" r="2.2" fill="none" stroke="#d8b83a" stroke-width="1.1"/><path d="M2.5 5.5h2v2h-2z" fill="#d8b83a"/><rect x="12" y="3.5" width="4.5" height="4" fill="none" stroke="#c8a040" stroke-width="1"/><path d="M13 3.5V2a1.5 1.5 0 0 1 3 0" stroke="#c8a040" fill="none" stroke-width=".9"/></svg>
<div class="a" style="left:860px;top:208px;width:8px;height:8px;background:#000;border:1px solid rgba(0,0,0,.25)"></div>
<div class="a" style="left:869px;top:208px;width:8px;height:8px;border:1px solid #9a9a9a;border-radius:50%;background:#fff"></div>
<div class="t" style="left:909px;top:209px;font-size:6.8px;color:#444">Continuous</div>
<div class="a" style="left:791px;top:484px;width:88px;height:3px;background:#d0d0d0;border-radius:2px"></div>
<div class="a" style="left:946px;top:64px;width:1px;height:426px;background:#d8d8dc"></div>
<svg class="a" style="left:948px;top:76px" width="12" height="68" viewBox="0 0 12 68">
<path d="M2 5l4-2 4 2v5l-4 2-4-2z" fill="#c04a3a"/><path d="M2 5l4 2 4-2M6 7v5" stroke="#e8c0b0" stroke-width=".6" fill="none"/>
<circle cx="6" cy="25" r="3.8" fill="none" stroke="#3aa04a" stroke-width="2"/><path d="M6 21.2a3.8 3.8 0 0 1 3.8 3.8" stroke="#e04a3a" stroke-width="2" fill="none"/><path d="M2.2 25A3.8 3.8 0 0 1 6 21.2" stroke="#e8b020" stroke-width="2" fill="none"/>
<rect x="1.5" y="38" width="9" height="6" fill="#333"/><path d="M4 46h4" stroke="#333" stroke-width="1.2"/>
<rect x="1.5" y="56" width="9" height="8" fill="#6a8ad0"/><path d="M3 60h6M3 62h6" stroke="#fff" stroke-width=".6"/>
</svg>
<div class="a" style="left:951px;top:66px;width:7px;height:7px;border:1px solid #c4c4c8;border-radius:50%"></div>


<!-- status bar -->
<div class="a" style="left:0;top:490px;width:960px;height:13px;background:#eeeef0"></div>
<div class="a" style="left:4px;top:492px;width:7px;height:8px;border:1px solid #333;border-left-width:3px"></div>
<div class="t" style="left:21px;top:493px;font-size:6.9px;color:#555">工作平面</div>
<div class="t" style="left:62px;top:493px;font-size:6.9px;color:#555">x -140.480</div>
<div class="t" style="left:106px;top:493px;font-size:6.9px;color:#555">y -72.031</div>
<div class="t" style="left:160px;top:493px;font-size:6.9px;color:#555">z 0</div>
<div class="t" style="left:204px;top:493px;font-size:6.9px;color:#555">公釐</div>
<div class="a" style="left:237px;top:492px;width:8px;height:8px;border:1px solid #555;background:#fff"></div>
<div class="t" style="left:248px;top:493px;font-size:6.5px;color:#555">圖層 05</div>
<div class="a" style="left:332px;top:491px;width:35px;height:11px;background:#dbe3f1"></div>
<div class="t" style="left:335px;top:493px;font-size:6.5px;color:#2e3a5c">鎖點鎖定</div>
<div class="a" style="left:368px;top:491px;width:19px;height:11px;background:#dbe3f1"></div>
<div class="t" style="left:371px;top:493px;font-size:6.5px;color:#2e3a5c">正交</div>
<div class="t" style="left:394px;top:493px;font-size:6.5px;color:#888">平面</div>
<div class="a" style="left:413px;top:491px;width:33px;height:11px;background:#dbe3f1"></div>
<div class="t" style="left:416px;top:493px;font-size:6.5px;color:#2e3a5c">物件鎖點</div>
<div class="t" style="left:452px;top:493px;font-size:6.5px;color:#888">智慧軌跡</div>
<div class="a" style="left:484px;top:491px;width:59px;height:11px;background:#dbe3f1"></div>
<div class="t" style="left:487px;top:493px;font-size:6.5px;color:#2e3a5c">操作軸 (工作平面)</div>
<svg class="a" style="left:548px;top:492px" width="6" height="9" viewBox="0 0 6 9"><rect x=".5" y="4" width="5" height="4.5" fill="none" stroke="#888" stroke-width=".8"/><path d="M1.5 4V2.5a1.5 1.5 0 0 1 3 0" fill="none" stroke="#888" stroke-width=".8"/></svg>
<div class="t" style="left:558px;top:493px;font-size:6.5px;color:#666">自動工作平面 (物件)</div>
<div class="t" style="left:624px;top:493px;font-size:6.5px;color:#666">記錄建構歷史</div>
<div class="t" style="left:675px;top:493px;font-size:6.5px;color:#666">過濾器</div>
<div class="t" style="left:705px;top:493px;font-size:6.5px;color:#666">記憶體使用量: 532 MB</div>
<div class="a" style="left:948px;top:492px;width:8px;height:8px;border:1px solid #333;border-right-width:3px"></div>
<!-- taskbar -->
<div class="a" style="left:0;top:503px;width:960px;height:22px;background:#f1e7d9"></div>
<svg class="a" style="left:10px;top:508px" width="13" height="13" viewBox="0 0 13 13"><rect x="0" y="0" width="6" height="6" fill="#1f7fe0"/><rect x="7" y="0" width="6" height="6" fill="#1f8ae8"/><rect x="0" y="7" width="6" height="6" fill="#1a74d8"/><rect x="7" y="7" width="6" height="6" fill="#1a80e0"/></svg>
<div class="a" style="left:31px;top:507px;width:108px;height:15px;background:#faf5ee;border-radius:8px;border:1px solid #eadfce"></div>
<svg class="a" style="left:36px;top:510px" width="9" height="9" viewBox="0 0 9 9"><circle cx="3.8" cy="3.8" r="2.8" fill="none" stroke="#333" stroke-width="1.2"/><path d="M6 6l2.5 2.5" stroke="#333" stroke-width="1.3"/></svg>
<div class="t" style="left:47px;top:511px;font-size:6.5px;color:#555">搜尋</div>
<svg class="a" style="left:112px;top:508px" width="26" height="13" viewBox="0 0 26 13"><ellipse cx="13" cy="6.5" rx="12" ry="6" fill="#dfe8dc"/><ellipse cx="8" cy="5.5" rx="5" ry="3.5" fill="#5a7a5a"/><ellipse cx="18" cy="5" rx="6" ry="3.5" fill="#4a6a4a"/><path d="M3 9c4-2 8 1 12-1s6 0 8 0" stroke="#8aa08a" stroke-width="1.5" fill="none"/><path d="M2 10.5h22" stroke="#c8d8c8" stroke-width="1"/></svg>
<svg class="a" style="left:143px;top:508px" width="12" height="12" viewBox="0 0 12 12"><path d="M1 11V4h4v4h6v3z" fill="#222"/><rect x="6" y="1" width="5" height="6" fill="#fff" stroke="#ccc" stroke-width=".5"/></svg>
<svg class="a" style="left:165px;top:508px" width="12" height="12" viewBox="0 0 12 12"><circle cx="6" cy="6" r="5.5" fill="#e33b2e"/><path d="M6 6L1.2 3.2A5.5 5.5 0 0 1 10.8 3.2z" fill="#e33b2e"/><path d="M6 6 10.8 3.2A5.5 5.5 0 0 1 6 11.5z" fill="#f5c518"/><path d="M6 6 6 11.5A5.5 5.5 0 0 1 1.2 3.2z" fill="#2da94f"/><circle cx="6" cy="6" r="2.6" fill="#fff"/><circle cx="6" cy="6" r="2" fill="#4285f4"/></svg>
<svg class="a" style="left:187px;top:508px" width="12" height="12" viewBox="0 0 12 12"><path d="M6 .5c3 0 5.5 2.5 5.5 5.5S9 11.5 6 11.5.5 9 .5 6 3 .5 6 .5z" fill="#7a6ae8"/><path d="M2 3c2-2 5-2 7 0L6 7z" fill="#f0a040"/><path d="M6 7l4 2c-1 2-4 3-6 2z" fill="#3ab0e8"/><path d="M3 9l3-2-4-3z" fill="#e84aa0"/></svg>
<svg class="a" style="left:209px;top:508px" width="12" height="12" viewBox="0 0 12 12"><path d="M0 2h5l1 1h6v8H0z" fill="#f4b818"/><rect x="0" y="5" width="12" height="6" fill="#ffd04a"/><rect x="3" y="7" width="6" height="2" fill="#3a8ae8"/></svg>
<svg class="a" style="left:231px;top:508px" width="12" height="12" viewBox="0 0 12 12"><circle cx="6" cy="6" r="5.5" fill="#1a8ad8"/><path d="M3 7c0-3 6-4 6-1 0 1-2 1-3 1" stroke="#4ad0a0" stroke-width="1.6" fill="none"/></svg>
<svg class="a" style="left:254px;top:508px" width="12" height="12" viewBox="0 0 12 12"><rect x="1" y="1" width="10" height="10" rx="2" fill="#2a5a8a"/><rect x="3.5" y="3.5" width="5" height="5" fill="#5ac0a0"/></svg>
<svg class="a" style="left:276px;top:508px" width="12" height="12" viewBox="0 0 12 12"><path d="M1 4l6-3 4 3v5l-6 3-4-3z" fill="#3a7ad8"/><path d="M1 4l6 3 4-3" stroke="#9ad" fill="none" stroke-width=".6"/></svg>
<svg class="a" style="left:298px;top:507px" width="12" height="13" viewBox="0 0 12 13"><rect x="1" y="1" width="10" height="10" fill="#222"/><path d="M3 3l6 6M5 8l4-4" stroke="#fff" stroke-width="1.4"/></svg>
<svg class="a" style="left:320px;top:508px" width="12" height="12" viewBox="0 0 12 12"><rect x="1" y="2" width="10" height="8" rx="1" fill="#1a6ad0"/><path d="M2 3l4 3 4-3" stroke="#fff" stroke-width=".8" fill="none"/></svg>
<svg class="a" style="left:342px;top:508px" width="12" height="12" viewBox="0 0 12 12"><circle cx="6" cy="6" r="5" fill="#e05030"/><circle cx="8" cy="8" r="3" fill="#c03a2a"/></svg>
<svg class="a" style="left:364px;top:508px" width="12" height="12" viewBox="0 0 12 12"><rect x="1" y="1" width="10" height="10" rx="1.5" fill="#1f9a4a"/><path d="M3.5 3.5l5 5M8.5 3.5l-5 5" stroke="#fff" stroke-width="1.3"/></svg>
<svg class="a" style="left:386px;top:507px" width="12" height="12" viewBox="0 0 12 12"><circle cx="6" cy="6" r="5.5" fill="#666"/><circle cx="6" cy="6" r="3" fill="#333"/><circle cx="8.5" cy="3.5" r="2.5" fill="#e04a3a"/></svg>
<div class="a" style="left:388px;top:522px;width:8px;height:2px;background:#3a7ad8;border-radius:1px"></div><div class="a" style="left:170px;top:522.5px;width:2px;height:1.5px;background:#999;border-radius:1px"></div><div class="a" style="left:304px;top:522.5px;width:2px;height:1.5px;background:#999;border-radius:1px"></div><div class="a" style="left:325px;top:522.5px;width:2px;height:1.5px;background:#999;border-radius:1px"></div><div class="a" style="left:347px;top:522.5px;width:2px;height:1.5px;background:#999;border-radius:1px"></div><div class="a" style="left:369px;top:522.5px;width:2px;height:1.5px;background:#999;border-radius:1px"></div>

<svg class="a" style="left:737px;top:507px" width="12" height="14" viewBox="0 0 12 14"><path d="M4 2v8" stroke="#3a6ac8" stroke-width="2.4"/><circle cx="4" cy="11" r="2.5" fill="#3a6ac8"/><circle cx="8" cy="3.5" r="3" fill="#e04a3a"/><text x="6.8" y="5.2" font-size="4" fill="#fff" font-family="Liberation Sans">1</text></svg>
<div class="t" style="left:752px;top:506px;font-size:6px;color:#333">富適會升溫</div>
<div class="t" style="left:752px;top:514px;font-size:6px;color:#777">晴天</div>
<svg class="a" style="left:816px;top:511px" width="8" height="6" viewBox="0 0 8 6"><path d="M1 5 4 2l3 3" stroke="#333" stroke-width="1" fill="none"/></svg>
<svg class="a" style="left:831px;top:509px" width="11" height="9" viewBox="0 0 11 9"><path d="M2 7h7a2 2 0 0 0 0-4 3 3 0 0 0-6 0 2 2 0 0 0-1 4z" fill="none" stroke="#333" stroke-width="1"/><path d="M1 1l9 7" stroke="#333" stroke-width=".9"/></svg>
<svg class="a" style="left:849px;top:508px" width="7" height="11" viewBox="0 0 7 11"><rect x="2" y="1" width="3" height="5.5" rx="1.5" fill="#3a6ac8"/><path d="M1 5a2.5 2.5 0 0 0 5 0M3.5 8v2" stroke="#3a6ac8" fill="none"/></svg>
<div class="t" style="left:863px;top:509px;font-size:7px;color:#333">英</div>
<svg class="a" style="left:878px;top:509px" width="10" height="8" viewBox="0 0 10 8"><path d="M1 3a6 6 0 0 1 8 0M2.5 4.8a4 4 0 0 1 5 0" stroke="#333" fill="none" stroke-width="1"/><circle cx="5" cy="6.8" r="1" fill="#333"/></svg>
<svg class="a" style="left:891px;top:509px" width="11" height="8" viewBox="0 0 11 8"><path d="M1 3h2l3-2v6L3 5H1z" fill="#333"/><path d="M8 2a3 3 0 0 1 0 4M9.5 1a5 5 0 0 1 0 6" stroke="#333" fill="none" stroke-width=".8"/></svg>
<svg class="a" style="left:903px;top:508px" width="11" height="10" viewBox="0 0 11 10"><path d="M0 9l2-5 2 2 2-5 2 4 3-1v5z" fill="#2a7a2a"/></svg>
<div class="t" style="left:924px;top:506px;font-size:6px;color:#444">上午 10:16</div>
<div class="t" style="left:923px;top:514px;font-size:6px;color:#444">2026/3/21</div>

<!-- recorder window -->
<div class="a" id="rec" style="left:26px;top:12px;width:223.5px;height:301px;background:#fff;border-radius:3px;box-shadow:0 0 0 1px rgba(0,0,0,.06),0 1px 4px rgba(0,0,0,.16)"></div>
<div id="recc" style="position:absolute;left:0;top:0;width:960px;height:525px;pointer-events:none">
<!-- title row -->
<svg class="a" style="left:29px;top:17px" width="12" height="12" viewBox="0 0 12 12"><circle cx="6" cy="6" r="5.2" fill="#747474"/><path d="M2.8 7.2 Q6 3 9.2 7.2Z" fill="#fff"/></svg>
<svg class="a" style="left:47px;top:19px" width="10" height="9" viewBox="0 0 10 9"><path d="M1 2.5h2l1-1.5h2l1 1.5h2v5.5h-8z" fill="#666"/><circle cx="5" cy="5" r="1.8" fill="#fff"/></svg>
<div class="a" style="left:66.5px;top:19.5px;width:7.5px;height:7.5px;background:#cc4440"></div>
<div class="a" style="left:85px;top:19.5px;width:2px;height:8px;background:#666"></div><div class="a" style="left:89.5px;top:19.5px;width:2px;height:8px;background:#666"></div>
<div class="t" style="left:134px;top:20px;font-size:6.5px;color:#555">00:20:15</div>
<div class="a" style="left:198px;top:23px;width:9px;height:1px;background:#777"></div>
<svg class="a" style="left:216px;top:18px" width="9" height="10" viewBox="0 0 9 10"><path d="M1 1l3.5 3.5L8 1M1 5.5l3.5 3.5L8 5.5" stroke="#666" stroke-width="1.1" fill="none"/></svg>
<svg class="a" style="left:234px;top:19px" width="9" height="9" viewBox="0 0 9 9"><path d="M1 1l7 7M8 1L1 8" stroke="#f2b4b4" stroke-width="1" fill="none"/></svg>
<!-- row 2 -->
<div class="a" style="left:29px;top:38px;width:15px;height:15px;border:1px solid #d5dde5;border-radius:50%"></div>
<div class="a" style="left:34px;top:42px;width:5px;height:6px;border:1px solid #dde6ee;border-radius:1px"></div>
<div class="a" style="left:47px;top:38px;width:15px;height:15px;border:1px solid #b9c9d8;border-radius:50%"></div>
<svg class="a" style="left:51px;top:41px" width="8" height="9" viewBox="0 0 8 9"><path d="M3 1v4.5L2 4.5 1 5.2 3.2 8.3h3.5L7.3 6V4.2L4.5 3.6V1z" fill="#5b98d4"/></svg>
<svg class="a" style="left:68px;top:42px" width="9" height="6" viewBox="0 0 9 6"><path d="M0.5 1h8l-1 4h-2.5l-1-1.5-1 1.5h-2z" fill="#aaa"/></svg>
<div class="a" style="left:87px;top:41px;width:7px;height:7px;border:1px solid #e6e6e6;border-radius:50%"></div>
<svg class="a" style="left:180px;top:41px" width="8" height="8" viewBox="0 0 8 8"><path d="M4 .5 7.5 4 4 7.5 .5 4z" stroke="#e8e8e8" fill="none"/></svg>
<svg class="a" style="left:197px;top:40px" width="10" height="10" viewBox="0 0 10 10"><path d="M9 1 4 6" stroke="#444" stroke-width="1.4"/><path d="M4 5.5 2 7 1 9.2 3.2 8.2 4.6 6.2z" fill="#444"/></svg>
<svg class="a" style="left:216.5px;top:42.5px" width="8" height="7" viewBox="0 0 8 7"><path d="M0 .5h3l1 1h4V6.5H0z" fill="#444"/></svg>
<svg class="a" style="left:233px;top:40px" width="10" height="10" viewBox="0 0 10 10"><circle cx="5" cy="5" r="3.1" fill="none" stroke="#4a9ae0" stroke-width="1.8" stroke-dasharray="1.4 1"/><circle cx="5" cy="5" r="2.3" fill="none" stroke="#4a9ae0" stroke-width="1.1"/></svg>
<!-- sidebar -->
<div class="a" style="left:29px;top:58px;width:17px;height:14px;background:#3a8ee0"></div>
<svg class="a" style="left:33px;top:60px" width="9" height="9" viewBox="0 0 9 9"><circle cx="4.5" cy="4.5" r="3.6" fill="none" stroke="#fff" stroke-width="1.3"/><path d="M2.6 5.2 4.5 3.3 6.4 5.2" stroke="#fff" stroke-width="1" fill="none"/></svg>
<svg class="a" style="left:33px;top:75px" width="9" height="9" viewBox="0 0 9 9"><circle cx="4.5" cy="4.5" r="3.4" fill="none" stroke="#777" stroke-width="1.1"/><path d="M4.5 2.5v2.2h1.6" stroke="#777" fill="none"/></svg>
<svg class="a" style="left:33px;top:89px" width="9" height="9" viewBox="0 0 9 9"><circle cx="4.5" cy="4.5" r="2.8" fill="none" stroke="#333" stroke-width="2.4" stroke-dasharray="1.5 0.8"/><circle cx="4.5" cy="4.5" r="2.2" fill="none" stroke="#333" stroke-width="1.2"/></svg>
<div class="t" style="left:34px;top:103px;font-size:9px;font-weight:bold;color:#333">?</div>
<div class="a" style="left:50px;top:54px;width:1px;height:231px;background:#e4e4e4"></div>
<!-- content -->
<div class="t" style="left:55px;top:59px;font-size:6px;color:#333;font-weight:bold">影像來源</div>
<div class="a" style="left:209px;top:58px;width:32px;height:9px;border:1px solid #d6d6d6;border-radius:1px"></div>
<div class="t" style="left:214px;top:60px;font-size:6px;color:#555">Preview</div>
<div class="a" style="left:55px;top:70px;width:186px;height:10px;border:1px solid #dcdcdc;border-radius:1px"></div>
<div class="t" style="left:58px;top:72px;font-size:6px;color:#333">全螢幕</div>
<div class="a" style="left:87px;top:85px;width:31px;height:16px;background:#3a8ee0"></div>
<svg class="a" style="left:65px;top:89px" width="11" height="8" viewBox="0 0 11 8"><rect x="0" y="1" width="7.5" height="6" fill="#8a8a8a"/><path d="M7.5 4 11 1.5v5z" fill="#8a8a8a"/></svg>
<svg class="a" style="left:97px;top:88px" width="11" height="10" viewBox="0 0 11 10"><rect x="1" y="1" width="9" height="6.5" fill="none" stroke="#cfe3f7" stroke-width="1"/><path d="M4 9h3" stroke="#cfe3f7"/></svg>
<svg class="a" style="left:128px;top:88px" width="11" height="10" viewBox="0 0 11 10"><rect x="1" y="1" width="9" height="6.5" fill="none" stroke="#666" stroke-width="1"/><path d="M5.5 7.5v2M3.5 9.5h4" stroke="#666"/></svg>
<svg class="a" style="left:158px;top:88px" width="11" height="10" viewBox="0 0 11 10"><rect x="1" y="1" width="9" height="8" fill="none" stroke="#555" stroke-width="1"/><path d="M1 2.5h9" stroke="#555" stroke-width="1.2"/></svg>
<svg class="a" style="left:189px;top:88px" width="11" height="10" viewBox="0 0 11 10"><path d="M1 3V1h2.5M7.5 1H10v2M10 7v2H7.5M3.5 9H1V7" stroke="#777" stroke-width="1" fill="none"/></svg>
<svg class="a" style="left:220px;top:89px" width="11" height="8" viewBox="0 0 11 8"><rect x="1" y="2" width="5" height="4" rx="2" fill="none" stroke="#777" stroke-width="1.2"/><rect x="5" y="2" width="5" height="4" rx="2" fill="none" stroke="#777" stroke-width="1.2"/></svg>
<div class="t" style="left:55px;top:107px;font-size:6px;color:#333;font-weight:bold">影像編碼器</div>
<div class="a" style="left:56px;top:120px;width:37px;height:10px;background:#3a8ee0"></div>
<div class="t" style="left:107px;top:122px;font-size:6px;color:#a8a8a8">Gif</div>
<div class="t" style="left:136px;top:122px;font-size:6px;color:#a8a8a8">SharpAvi</div>
<div class="t" style="left:175px;top:122px;font-size:6px;color:#a8a8a8">Stream</div>
<div class="t" style="left:211px;top:122px;font-size:6px;color:#a8a8a8">Discard</div>
<div class="a" style="left:55px;top:136px;width:186px;height:10px;border:1px solid #dedede;border-radius:1px"></div>
<div class="t" style="left:57px;top:138px;font-size:6px;color:#a0a0a0">Mp4 (x264 | AAC)</div>
<div class="t" style="left:234px;top:139px;font-size:4px;color:#777">▼</div>
<div class="t" style="left:55px;top:153px;font-size:6px;color:#aaa">FPS: 10</div>
<div class="a" style="left:82px;top:156px;width:131px;height:1px;background:#d0d0d0"></div>
<div class="a" style="left:113px;top:155px;width:18px;height:2px;background:#4a94d8"></div>
<div class="a" style="left:120px;top:151px;width:4px;height:9px;background:#c4c4c4;border-radius:1px"></div>
<div class="a" style="left:218px;top:152px;width:7px;height:7px;border:1px solid #d8d8d8"></div>
<div class="t" style="left:218px;top:151px;font-size:6px;color:#aaa">✓</div>
<div class="t" style="left:228px;top:153px;font-size:6px;color:#aaa">Limit</div>
<div class="t" style="left:55px;top:170px;font-size:6px;color:#aaa">品質:&nbsp; 70%</div>
<div class="a" style="left:91px;top:173px;width:147px;height:1px;background:#d0d0d0"></div>
<div class="a" style="left:179px;top:172px;width:30px;height:2px;background:#4a94d8"></div>
<div class="a" style="left:192px;top:168px;width:4px;height:9px;background:#c4c4c4;border-radius:1px"></div>
<div class="a" style="left:55px;top:185px;width:186px;height:1px;background:#e6e6e6"></div>
<div class="t" style="left:55px;top:194px;font-size:6px;color:#333;font-weight:bold">音訊</div>
<div class="t" style="left:90px;top:193px;font-size:6.5px;color:#333">Webcam</div>
<div class="a" style="left:55px;top:203px;width:28px;height:20px;border:1px solid #e0e0e0;border-radius:1px"></div>
<svg class="a" style="left:61px;top:207px" width="8" height="12" viewBox="0 0 8 12"><rect x="2.3" y="0.5" width="3.4" height="6.5" rx="1.7" fill="#4a8fd4"/><path d="M1 5.5a3 3 0 0 0 6 0M4 8.5v2" stroke="#4a8fd4" stroke-width="1" fill="none"/></svg>
<div class="t" style="left:73px;top:212px;font-size:4px;color:#555">▼</div>
<svg class="a" style="left:90px;top:205px" width="8" height="9" viewBox="0 0 8 9"><circle cx="4" cy="3.2" r="2.6" fill="none" stroke="#444" stroke-width="1.2"/><circle cx="4" cy="3.2" r="0.9" fill="#444"/><path d="M1 8.5h6" stroke="#444" stroke-width="1.4"/></svg>
<div class="a" style="left:101px;top:204px;width:104px;height:10px;border:1px solid #d8d8d8;border-radius:1px"></div>
<div class="t" style="left:104px;top:206px;font-size:6px;color:#333">無視訊</div>
<div class="t" style="left:197px;top:207px;font-size:4px;color:#444">▼</div>
<div class="a" style="left:207px;top:204px;width:32px;height:10px;border:1px solid #d8d8d8;border-radius:1px"></div>
<div class="t" style="left:212px;top:206px;font-size:6px;color:#555">Preview</div>
<div class="a" style="left:90px;top:220px;width:7px;height:7px;border:1px solid #e2e2e2"></div>
<div class="t" style="left:100px;top:221px;font-size:6.3px;color:#bdbdbd">Record Webcam to separate file</div>
<div class="a" style="left:55px;top:236px;width:186px;height:1px;background:#e6e6e6"></div>
<div class="t" style="left:55px;top:242px;font-size:6px;color:#333;font-weight:bold">截圖</div>
<div class="a" style="left:57px;top:253px;width:14px;height:14px;border:1px solid #8dbbe6;border-radius:50%"></div>
<svg class="a" style="left:61px;top:256px" width="6" height="8" viewBox="0 0 6 8"><path d="M.5.5h3.2L5.5 2.3v5.2h-5z" fill="none" stroke="#8dbbe6" stroke-width=".9"/></svg>
<svg class="a" style="left:78px;top:256px" width="8" height="8" viewBox="0 0 8 8"><rect x="1" y="1.5" width="6" height="6" fill="none" stroke="#555" stroke-width="1"/><path d="M2.5 1h3" stroke="#555" stroke-width="1.4"/></svg>
<div class="a" style="left:94px;top:254px;width:34px;height:12px;border:1px solid #e0e0e0;border-radius:6px"></div>
<div class="t" style="left:103px;top:257px;font-size:6px;color:#444">Imgur</div>
<svg class="a" style="left:135px;top:256px" width="8" height="8" viewBox="0 0 8 8"><path d="M7 1 2.5 5.5" stroke="#555" stroke-width="1.6"/><path d="M2 5 1 7.2l2.2-1z" fill="#555"/></svg>
<!-- footer -->
<div class="a" style="left:26px;top:287px;width:223px;height:1px;background:#e8e8e8"></div>
<svg class="a" style="left:28px;top:289px" width="9" height="8" viewBox="0 0 9 8"><path d="M0 .5h3l1 1h5V7.5H0z" fill="#333"/></svg>
<div class="t" style="left:41px;top:290px;font-size:6px;color:#444">輸出目錄</div>
<div class="a" style="left:68px;top:288px;width:155px;height:10px;border:1px solid #e2e2e2"></div>
<div class="t" style="left:69px;top:290px;font-size:6.5px;color:#a8a8a8">C:\Users\yusan\Documents\Capture</div>
<div class="a" style="left:222px;top:288px;width:26px;height:10px;border:1px solid #e2e2e2"></div>
<div class="t" style="left:230px;top:289px;font-size:6px;color:#777">•••</div>
<div class="t" style="left:28px;top:302px;font-size:6.3px;color:#555">© Mathew Sachin</div>
</div>
</div>
</body></html>
